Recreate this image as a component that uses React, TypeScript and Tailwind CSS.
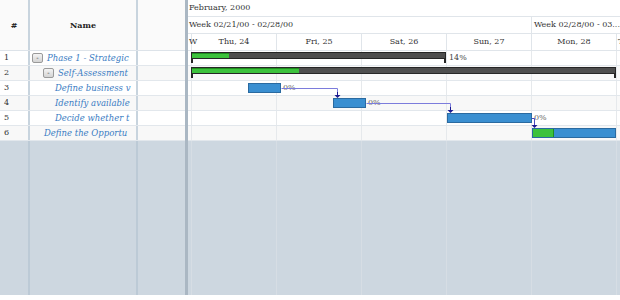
import React from 'react';

type Row = { n: string; name: string; btn?: boolean; pl: string };

const rows: Row[] = [
  { n: '1', name: 'Phase 1 - Strategic', btn: true, pl: 'pl-[2px]' },
  { n: '2', name: 'Self-Assessment', btn: true, pl: 'pl-[13px]' },
  { n: '3', name: 'Define business v', pl: 'pl-[25px]' },
  { n: '4', name: 'Identify available', pl: 'pl-[25px]' },
  { n: '5', name: 'Decide whether t', pl: 'pl-[25px]' },
  { n: '6', name: 'Define the Opportu', pl: 'pl-[14px]' },
];

const days = [
  { w: 'w-[4px]', t: 'W', b: true },
  { w: 'w-[85px]', t: 'Thu, 24', b: true },
  { w: 'w-[85px]', t: 'Fri, 25', b: true },
  { w: 'w-[85px]', t: 'Sat, 26', b: true },
  { w: 'w-[85px]', t: 'Sun, 27', b: true },
  { w: 'w-[85px]', t: 'Mon, 28', b: true },
  { w: 'flex-1', t: 'T', b: false },
];

function LeftGrid() {
  return (
    <div className="w-[185px] shrink-0 flex flex-col">
      <div className="h-[51px] flex border-b border-[#dde3e9] bg-[#fafafa] font-bold text-[#222]">
        <div className="w-[30px] border-r-2 border-[#c8d4de] flex items-center justify-center">#</div>
        <div className="w-[108px] border-r-2 border-[#c8d4de] flex items-center justify-center">Name</div>
        <div className="flex-1" />
      </div>
      {rows.map((r, i) => (
        <div
          key={r.n}
          className={`h-[15px] flex border-b border-[#e2e7ec] ${i % 2 === 1 ? 'bg-[#f8f8f8]' : 'bg-white'}`}
        >
          <div className="w-[30px] border-r-2 border-[#c8d4de] flex items-center pl-[4px] text-[#333]">{r.n}</div>
          <div className={`w-[108px] border-r-2 border-[#c8d4de] flex items-center pr-[2px] ${r.pl}`}>
            {r.btn && (
              <span className="w-[11px] h-[10px] mr-[4px] shrink-0 flex items-center justify-center rounded-[2px] border border-[#9a9a9a] bg-gradient-to-b from-[#f4f4f4] to-[#d4d4d4] text-[7px] leading-none text-[#333]">
                -
              </span>
            )}
            <span className="italic text-[8.5px] text-[#3a7cc3] whitespace-nowrap">{r.name}</span>
          </div>
          <div className="flex-1" />
        </div>
      ))}
      <div className="flex-1 flex bg-[#cdd7e0]">
        <div className="w-[30px] border-r-2 border-[#bccad6]" />
        <div className="w-[108px] border-r-2 border-[#bccad6]" />
        <div className="flex-1" />
      </div>
    </div>
  );
}

function Chart() {
  return (
    <div className="flex-1 flex flex-col min-w-0 overflow-hidden">
      <div className="h-[17px] flex items-center pl-[1px] border-b border-[#e0e5ea] bg-white text-[#333] whitespace-nowrap">
        February, 2000
      </div>
      <div className="h-[17px] flex border-b border-[#e0e5ea] bg-white text-[#333] whitespace-nowrap">
        <div className="w-[344px] shrink-0 border-r border-[#e0e5ea] flex items-center pl-[1px]">Week 02/21/00 - 02/28/00</div>
        <div className="flex-1 flex items-center pl-[2px] overflow-hidden">Week 02/28/00 - 03...</div>
      </div>
      <div className="h-[17px] flex border-b border-[#e0e5ea] bg-white text-[#333] whitespace-nowrap">
        {days.map((d, i) => (
          <div
            key={d.t}
            className={`${d.w} shrink-0 flex items-center ${i === 0 || i === 6 ? 'justify-start pl-[1px]' : 'justify-center'} ${d.b ? 'border-r border-[#e0e5ea]' : ''}`}
          >
            {d.t}
          </div>
        ))}
      </div>
      <div className="relative flex-1 flex flex-col">
        {rows.map((r, i) => (
          <div
            key={r.n}
            className={`h-[15px] flex border-b border-[#e2e7ec] ${i % 2 === 1 ? 'bg-[#f8f8f8]' : 'bg-white'}`}
          >
            {days.map((d) => (
              <div key={d.t} className={`${d.w} shrink-0 ${d.b ? 'border-r border-[#e6e9ec]' : ''}`} />
            ))}
          </div>
        ))}
        <div className="flex-1 flex bg-[#cdd7e0]">
          {days.map((d) => (
            <div key={d.t} className={`${d.w} shrink-0 ${d.b ? 'border-r border-[#d6dde4]' : ''}`} />
          ))}
        </div>

        <div className="absolute left-0 top-0 w-full h-[90px] pointer-events-none overflow-hidden">
          {/* summary row 1 */}
          <div className="absolute left-[3px] top-[1px] w-[255px] h-[7px] border border-[#262626] bg-[#4e4e4e] overflow-hidden">
            <div className="h-full w-[37px] bg-[#3cc23c] border-t border-[#1f8f1f]" />
          </div>
          <div className="absolute left-[3px] top-[8px] w-[2px] h-[4px] bg-[#262626]" />
          <div className="absolute left-[256px] top-[8px] w-[2px] h-[4px] bg-[#262626]" />
          <div className="absolute left-[261px] top-[1px] h-[12px] flex items-center text-[#444]">14%</div>

          {/* summary row 2 */}
          <div className="absolute left-[3px] top-[16px] w-[425px] h-[7px] border border-[#262626] bg-[#4e4e4e] overflow-hidden">
            <div className="h-full w-[107px] bg-[#3cc23c] border-t border-[#1f8f1f]" />
          </div>
          <div className="absolute left-[3px] top-[23px] w-[2px] h-[4px] bg-[#262626]" />
          <div className="absolute left-[426px] top-[23px] w-[2px] h-[4px] bg-[#262626]" />

          {/* tasks */}
          <div className="absolute left-[60px] top-[32px] w-[33px] h-[10px] border border-[#2a6aa0] bg-[#3a8fd1]" />
          <div className="absolute left-[95px] top-[31px] h-[12px] flex items-center text-[#666]">0%</div>

          <div className="absolute left-[145px] top-[47px] w-[33px] h-[10px] border border-[#2a6aa0] bg-[#3a8fd1]" />
          <div className="absolute left-[180px] top-[46px] h-[12px] flex items-center text-[#666]">0%</div>

          <div className="absolute left-[259px] top-[62px] w-[85px] h-[10px] border border-[#2a6aa0] bg-[#3a8fd1]" />
          <div className="absolute left-[346px] top-[61px] h-[12px] flex items-center text-[#666]">0%</div>

          <div className="absolute left-[344px] top-[77px] w-[84px] h-[10px] border border-[#2a6aa0] bg-[#3a8fd1] overflow-hidden">
            <div className="h-full w-[21px] bg-[#3cc23c] border-r border-[#1f8f1f]" />
          </div>

          <svg className="absolute left-0 top-0" width="432" height="90" viewBox="0 0 432 90">
            <path d="M93.5 37.5 H149.5 V44" fill="none" stroke="#7c7cdc" strokeWidth="1" />
            <path d="M149.5 41 V44" stroke="#1a1a90" strokeWidth="1" />
            <polygon points="146.5,44 152.5,44 149.5,47" fill="#1a1a90" />

            <path d="M178.5 52.5 H262.5 V59" fill="none" stroke="#7c7cdc" strokeWidth="1" />
            <path d="M262.5 56 V59" stroke="#1a1a90" strokeWidth="1" />
            <polygon points="259.5,59 265.5,59 262.5,62" fill="#1a1a90" />

            <path d="M344 67.5 H346.5 V74" fill="none" stroke="#4a4ac0" strokeWidth="1" />
            <polygon points="343.5,74 349.5,74 346.5,77" fill="#1a1a90" />
          </svg>
        </div>
      </div>
    </div>
  );
}

export default function App() {
  return (
    <div className="w-[620px] h-[300px] bg-white overflow-hidden font-['DejaVu_Serif',serif] text-[8px] text-[#333]">
      <div className="h-[295px] flex">
        <LeftGrid />
        <div className="w-[3px] shrink-0 bg-[#aab7c3]" />
        <Chart />
      </div>
    </div>
  );
}
